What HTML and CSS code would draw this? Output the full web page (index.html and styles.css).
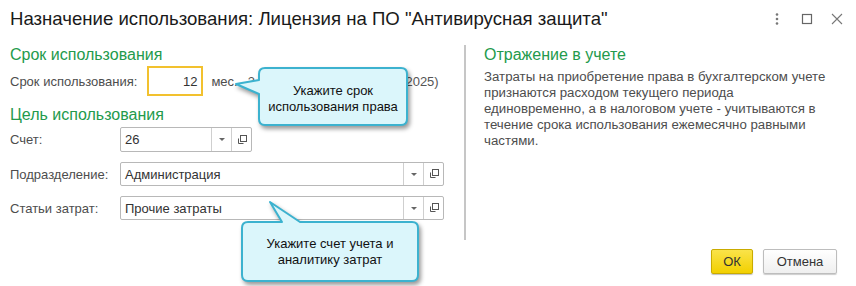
FILE: index.html
```html
<!DOCTYPE html>
<html lang="ru">
<head>
  <meta charset="UTF-8">
  <title>Назначение использования</title>
  <link rel="stylesheet" href="styles.css">
</head>
<body>
  <div class="janela">
    <header class="titulo">
      <h1>Назначение использования: Лицензия на ПО "Антивирусная защита"</h1>
      <div class="icones">
        <svg class="ic-menu" width="4" height="12" viewBox="0 0 4 12"><circle cx="2" cy="1.5" r="1.3" fill="#777"/><circle cx="2" cy="6" r="1.3" fill="#777"/><circle cx="2" cy="10.5" r="1.3" fill="#777"/></svg>
        <svg class="ic-max" width="12" height="12" viewBox="0 0 12 12"><rect x="1.5" y="1.5" width="9" height="9" fill="none" stroke="#666" stroke-width="1.2"/></svg>
        <svg class="ic-fechar" width="12" height="12" viewBox="0 0 12 12"><path d="M1 1L11 11M11 1L1 11" stroke="#777" stroke-width="1.1"/></svg>
      </div>
    </header>

    <div class="corpo">
      <section class="esquerda">
        <h2>Срок использования</h2>
        <div class="linha-prazo">
          <span class="rotulo">Срок использования:</span>
          <div class="campo-num">12</div>
          <span class="unidade">мес.</span>
          <span class="periodo">3 года (01.01.2023 - 31.12.2025)</span>
        </div>

        <h2 class="h-cel">Цель использования</h2>
        <div class="linha">
          <span class="rotulo">Счет:</span>
          <div class="campo curto">
            <span class="valor">26</span>
            <span class="btn-sel"><i></i></span>
            <span class="btn-abrir"><svg width="10" height="10" viewBox="0 0 10 10"><rect x="3.5" y="0.5" width="6" height="6" fill="none" stroke="#555"/><path d="M1.5 3.5V8.5H6.5" fill="none" stroke="#555"/></svg></span>
          </div>
        </div>
        <div class="linha">
          <span class="rotulo">Подразделение:</span>
          <div class="campo">
            <span class="valor">Администрация</span>
            <span class="btn-sel"><i></i></span>
            <span class="btn-abrir"><svg width="10" height="10" viewBox="0 0 10 10"><rect x="3.5" y="0.5" width="6" height="6" fill="none" stroke="#555"/><path d="M1.5 3.5V8.5H6.5" fill="none" stroke="#555"/></svg></span>
          </div>
        </div>
        <div class="linha">
          <span class="rotulo">Статьи затрат:</span>
          <div class="campo">
            <span class="valor">Прочие затраты</span>
            <span class="btn-sel"><i></i></span>
            <span class="btn-abrir"><svg width="10" height="10" viewBox="0 0 10 10"><rect x="3.5" y="0.5" width="6" height="6" fill="none" stroke="#555"/><path d="M1.5 3.5V8.5H6.5" fill="none" stroke="#555"/></svg></span>
          </div>
        </div>
      </section>

      <div class="divisor"></div>

      <section class="direita">
        <h2>Отражение в учете</h2>
        <p class="texto">Затраты на приобретение права в бухгалтерском учете признаются расходом текущего периода единовременно, а в налоговом учете - учитываются в течение срока использования ежемесячно равными частями.</p>
        <div class="acoes">
          <button class="btn-ok">ОК</button>
          <button class="btn-cancelar">Отмена</button>
        </div>
      </section>
    </div>

    <div class="dica dica-prazo">
      <svg width="190" height="75" viewBox="0 0 190 75"><path d="M35 6H171Q177 6 177 12V57Q177 63 171 63H35Q29 63 29 57V32L6 22L29 18V12Q29 6 35 6Z" fill="#dbf6fb" stroke="#3cb2cf" stroke-width="2" stroke-linejoin="round"/></svg>
      <div class="dica-texto">Укажите срок<br>использования права</div>
    </div>

    <div class="dica dica-conta">
      <svg width="190" height="90" viewBox="0 0 190 90"><path d="M12 26H46L34 6L64 26H176Q182 26 182 32V79Q182 85 176 85H12Q6 85 6 79V32Q6 26 12 26Z" fill="#dbf6fb" stroke="#3cb2cf" stroke-width="2" stroke-linejoin="round"/></svg>
      <div class="dica-texto">Укажите счет учета и<br>аналитику затрат</div>
    </div>
  </div>
</body>
</html>
```

FILE: styles.css
```css
:root {
  --verde: #239a4c;
  --cinza-texto: #4d4d4d;
  --borda: #b8b8b8;
}
* { box-sizing: border-box; margin: 0; padding: 0; }
body { font-family: "Liberation Sans", Arial, sans-serif; background: #fff; color: #333; }

.janela { position: relative; width: 856px; height: 286px; overflow: hidden; background: #fff; }

.titulo { height: 38px; display: flex; align-items: center; padding: 0 13px 0 10px; }
.titulo h1 { flex: 1; font-size: 18.6px; font-weight: normal; color: #1a1a1a; margin-top: -1px; }
.icones { display: flex; align-items: center; }
.ic-max { margin-left: 22px; }
.ic-fechar { margin-left: 18px; }

.corpo { display: flex; height: 248px; }

.esquerda { width: 464px; padding: 7px 0 0 10px; }
h2 { font-size: 16px; font-weight: normal; color: var(--verde); line-height: 20px; height: 20px; }
.h-cel { margin-top: 9px; }

.rotulo { font-size: 13px; color: var(--cinza-texto); width: 110px; flex: none; }
.linha-prazo { display: flex; align-items: center; margin-top: 1px; height: 30px; font-size: 13px; color: var(--cinza-texto); white-space: nowrap; }
.linha-prazo .rotulo { width: auto; margin-right: 10px; }
.campo-num { width: 56px; height: 30px; border: 2px solid #f2c12e; text-align: right; padding: 6px 4px 0 0; color: #333; }
.unidade { margin-left: 8px; }
.periodo { margin-left: 10px; color: #555; }

.linha { display: flex; align-items: center; height: 24px; margin-top: 10px; }
.h-cel + .linha { margin-top: 2px; height: 25px; }
.campo { display: flex; width: 324px; height: 100%; border: 1px solid var(--borda); border-radius: 2px; font-size: 13px; }
.campo.curto { width: 132px; }
.valor { flex: 1; padding: 0 4px; display: flex; align-items: center; color: #333; }
.btn-sel, .btn-abrir { width: 20px; flex: none; border-left: 1px solid #cfcfcf; display: flex; align-items: center; justify-content: center; }
.btn-sel i { width: 0; height: 0; border-left: 3px solid transparent; border-right: 3px solid transparent; border-top: 3px solid #666; }

.divisor { width: 2px; height: 195px; margin-top: 7px; background: #c6c6c6; }

.direita { flex: 1; display: flex; flex-direction: column; padding: 7px 19px 12px 18px; }
.texto { font-size: 13.25px; line-height: 16px; color: var(--cinza-texto); width: 345px; margin-top: 4px; }

.acoes { margin-top: auto; display: flex; justify-content: flex-end; gap: 10px; }
.acoes button { font-family: inherit; font-size: 13px; height: 25px; border-radius: 2px; color: #333; }
.btn-ok { width: 42px; background: linear-gradient(#fae34a, #f2d000); border: 1px solid #c9ab00; box-shadow: 0 1px 1px rgba(0,0,0,.25); }
.btn-cancelar { width: 74px; background: linear-gradient(#fff, #efefef); border: 1px solid #bdbdbd; color: #444; box-shadow: 0 1px 1px rgba(0,0,0,.2); }

.dica { position: absolute; }
.dica svg { display: block; filter: drop-shadow(2px 3px 2px rgba(0,0,0,.4)); }
.dica-texto { position: absolute; display: flex; align-items: center; justify-content: center; text-align: center; font-size: 13px; line-height: 16px; color: #111; }
.dica-prazo { left: 230px; top: 62px; }
.dica-prazo .dica-texto { left: 29px; top: 8px; width: 148px; height: 57px; }
.dica-conta { left: 236px; top: 196px; }
.dica-conta .dica-texto { left: 6px; top: 26px; width: 176px; height: 59px; }
```
